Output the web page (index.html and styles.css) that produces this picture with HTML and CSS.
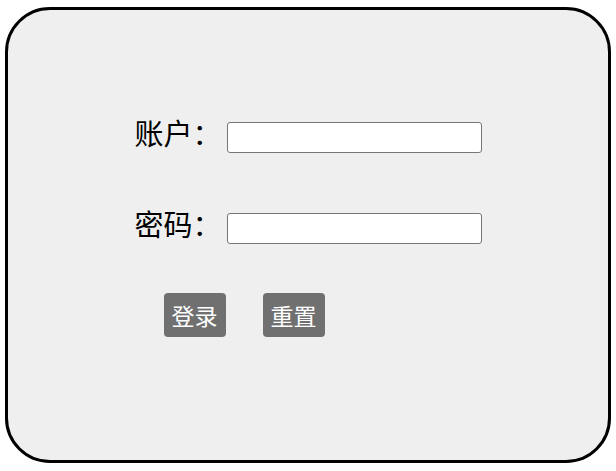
FILE: index.html
```html
<!DOCTYPE html>
<html lang="zh-CN">
<head>
<meta charset="utf-8">
<title>登录</title>
<link rel="stylesheet" href="styles.css">
</head>
<body>
<div class="card">
  <form class="form">
    <div class="row">
      <label class="label" for="user">账户：</label>
      <input class="field" id="user" type="text">
    </div>
    <div class="row row-second">
      <label class="label" for="pwd">密码：</label>
      <input class="field" id="pwd" type="password">
    </div>
    <div class="actions">
      <button class="btn" type="button">登录</button>
      <button class="btn" type="button">重置</button>
    </div>
  </form>
</div>
</body>
</html>
```
FILE: styles.css
```css
html, body {
  margin: 0;
  padding: 0;
  background: #ffffff;
}
body {
  padding: 7px 5px;
  font-family: "Noto Sans CJK SC", "Noto Sans", sans-serif;
}
.card {
  width: 600px;
  height: 450px;
  border: 3px solid #000;
  border-radius: 45px;
  background: #efefef;
}
.form {
  width: 347px;
  margin: 0 auto;
  padding-top: 112px;
  display: flex;
  flex-direction: column;
}
.row {
  display: flex;
  align-items: center;
  justify-content: space-between;
  height: 31px;
}
.row-second {
  margin-top: 60px;
}
.label {
  font-size: 29px;
  line-height: 31px;
  color: #000;
  margin-bottom: 10px;
  white-space: nowrap;
}
.field {
  box-sizing: border-box;
  flex: 0 0 255px;
  width: 255px;
  height: 31px;
  margin: 0;
  border: 1px solid #767676;
  border-radius: 3px;
  background: #fff;
}
.actions {
  display: flex;
  gap: 37px;
  margin-top: 49px;
  padding-left: 29px;
}
.btn {
  box-sizing: border-box;
  width: 62px;
  height: 44px;
  padding: 0;
  border: none;
  border-radius: 4px;
  background: #707070;
  color: #fff;
  font-family: "Noto Sans CJK SC", sans-serif;
  font-size: 23px;
  line-height: 44px;
}
```
